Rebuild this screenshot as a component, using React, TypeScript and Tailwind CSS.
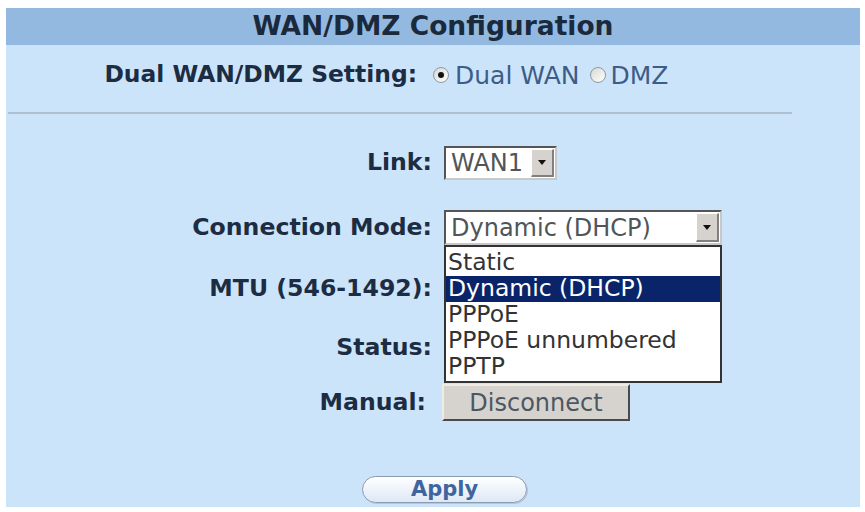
import type { ReactNode } from 'react';

const options = ['Static', 'Dynamic (DHCP)', 'PPPoE', 'PPPoE unnumbered', 'PPTP'];

function Label({ children }: { children: ReactNode }) {
  return (
    <div className="w-[426px] shrink-0 text-right text-[23.6px] font-bold leading-none text-[#1c2c42]">
      {children}
    </div>
  );
}

function Radio({ checked }: { checked?: boolean }) {
  return (
    <span className="flex h-[16px] w-[16px] shrink-0 items-center justify-center rounded-full border border-[#8d99a6] bg-gradient-to-br from-[#d8d8d2] to-white">
      {checked && <span className="h-[6px] w-[6px] rounded-full bg-[#111]" />}
    </span>
  );
}

function ArrowButton() {
  return (
    <div className="flex h-full w-[23px] items-center justify-center border-t border-l border-t-white border-l-white border-r-2 border-b-2 border-r-[#808080] border-b-[#808080] bg-[#d6d3ce]">
      <svg width="8" height="5" viewBox="0 0 8 5">
        <path d="M0 0h8L4 5z" fill="#111" />
      </svg>
    </div>
  );
}

function Select({ value, width }: { value: string; width: string }) {
  return (
    <div
      className={`flex h-full items-stretch border-2 border-[#555] border-b-[#c8c8c8] border-r-[#c8c8c8] bg-white ${width}`}
    >
      <div className="flex flex-1 items-center pl-[5px] text-[24px] leading-none text-[#505558]">
        {value}
      </div>
      <div className="p-[1px]">
        <ArrowButton />
      </div>
    </div>
  );
}

export default function App() {
  return (
    <div className="h-[512px] w-[865px] bg-white pt-[8px] pl-[6px] pr-[5px] pb-[5px] font-['DejaVu_Sans',sans-serif]">
      <div className="flex h-full flex-col bg-[#cce4fa]">
        <div className="flex h-[37px] items-center justify-center bg-[#93b9e1] text-[26.5px] font-bold leading-none text-[#1a2a3c]">
          WAN/DMZ Configuration
        </div>

        <div className="mt-[15px] flex h-[30px] items-center">
          <div className="w-[411px] shrink-0 text-right text-[23.4px] font-bold leading-none text-[#1c2c42]">
            Dual WAN/DMZ Setting:
          </div>
          <div className="ml-[16px] flex items-center text-[25px] leading-none text-[#3d5c88]">
            <Radio checked />
            <span className="ml-[6px]">Dual WAN</span>
            <span className="ml-[11px]">
              <Radio />
            </span>
            <span className="ml-[4px]">DMZ</span>
          </div>
        </div>

        <div className="mt-[22px] ml-[2px] h-[2px] w-[784px] bg-[#aebfd0]" />

        <div className="mt-[32px] flex h-[34px] items-center gap-[12px]">
          <Label>Link:</Label>
          <Select value="WAN1" width="w-[113px]" />
        </div>

        <div className="mt-[30px] flex h-[35px] items-center gap-[12px]">
          <Label>Connection Mode:</Label>
          <div className="relative h-full">
            <Select value="Dynamic (DHCP)" width="w-[278px]" />
            <div className="absolute top-full left-0 z-10 w-[278px] border-2 border-[#333] bg-white pt-[3px] pb-[1px]">
              {options.map((o) => (
                <div
                  key={o}
                  className={`flex h-[26px] items-center pl-[2px] text-[23.5px] leading-none ${
                    o === 'Dynamic (DHCP)' ? 'bg-[#0a246a] text-white' : 'text-[#333]'
                  }`}
                >
                  {o}
                </div>
              ))}
            </div>
          </div>
        </div>

        <div className="mt-[27px] flex h-[34px] items-center gap-[12px]">
          <Label>MTU (546-1492):</Label>
          <div className="h-full w-[150px] border-2 border-[#555] bg-white" />
        </div>

        <div className="mt-[25px] flex h-[34px] items-center gap-[12px]">
          <Label>Status:</Label>
          <div className="h-full w-[200px] border-2 border-[#555] bg-white" />
        </div>

        <div className="mt-[19px] flex h-[37px] items-center gap-[10px]">
          <div className="w-[420px] shrink-0 text-right text-[23.6px] font-bold leading-none text-[#1c2c42]">
            Manual:
          </div>
          <button className="ml-[6px] flex h-full w-[188px] items-center justify-center border-t-2 border-l-2 border-t-[#eeeae4] border-l-[#eeeae4] border-r-2 border-b-2 border-r-[#4a4a4a] border-b-[#4a4a4a] bg-[#d6d3ce] text-[24px] leading-none text-[#4d5763]">
            Disconnect
          </button>
        </div>

        <div className="mt-[55px] ml-[356px]">
          <button className="flex h-[27px] w-[165px] items-center justify-center rounded-full border border-[#8b9bb0] bg-gradient-to-b from-white to-[#dde8f5] text-[21px] font-bold leading-none text-[#3f64a0] shadow-[1px_1px_0_#b8c6d6]">
            Apply
          </button>
        </div>
      </div>
    </div>
  );
}
